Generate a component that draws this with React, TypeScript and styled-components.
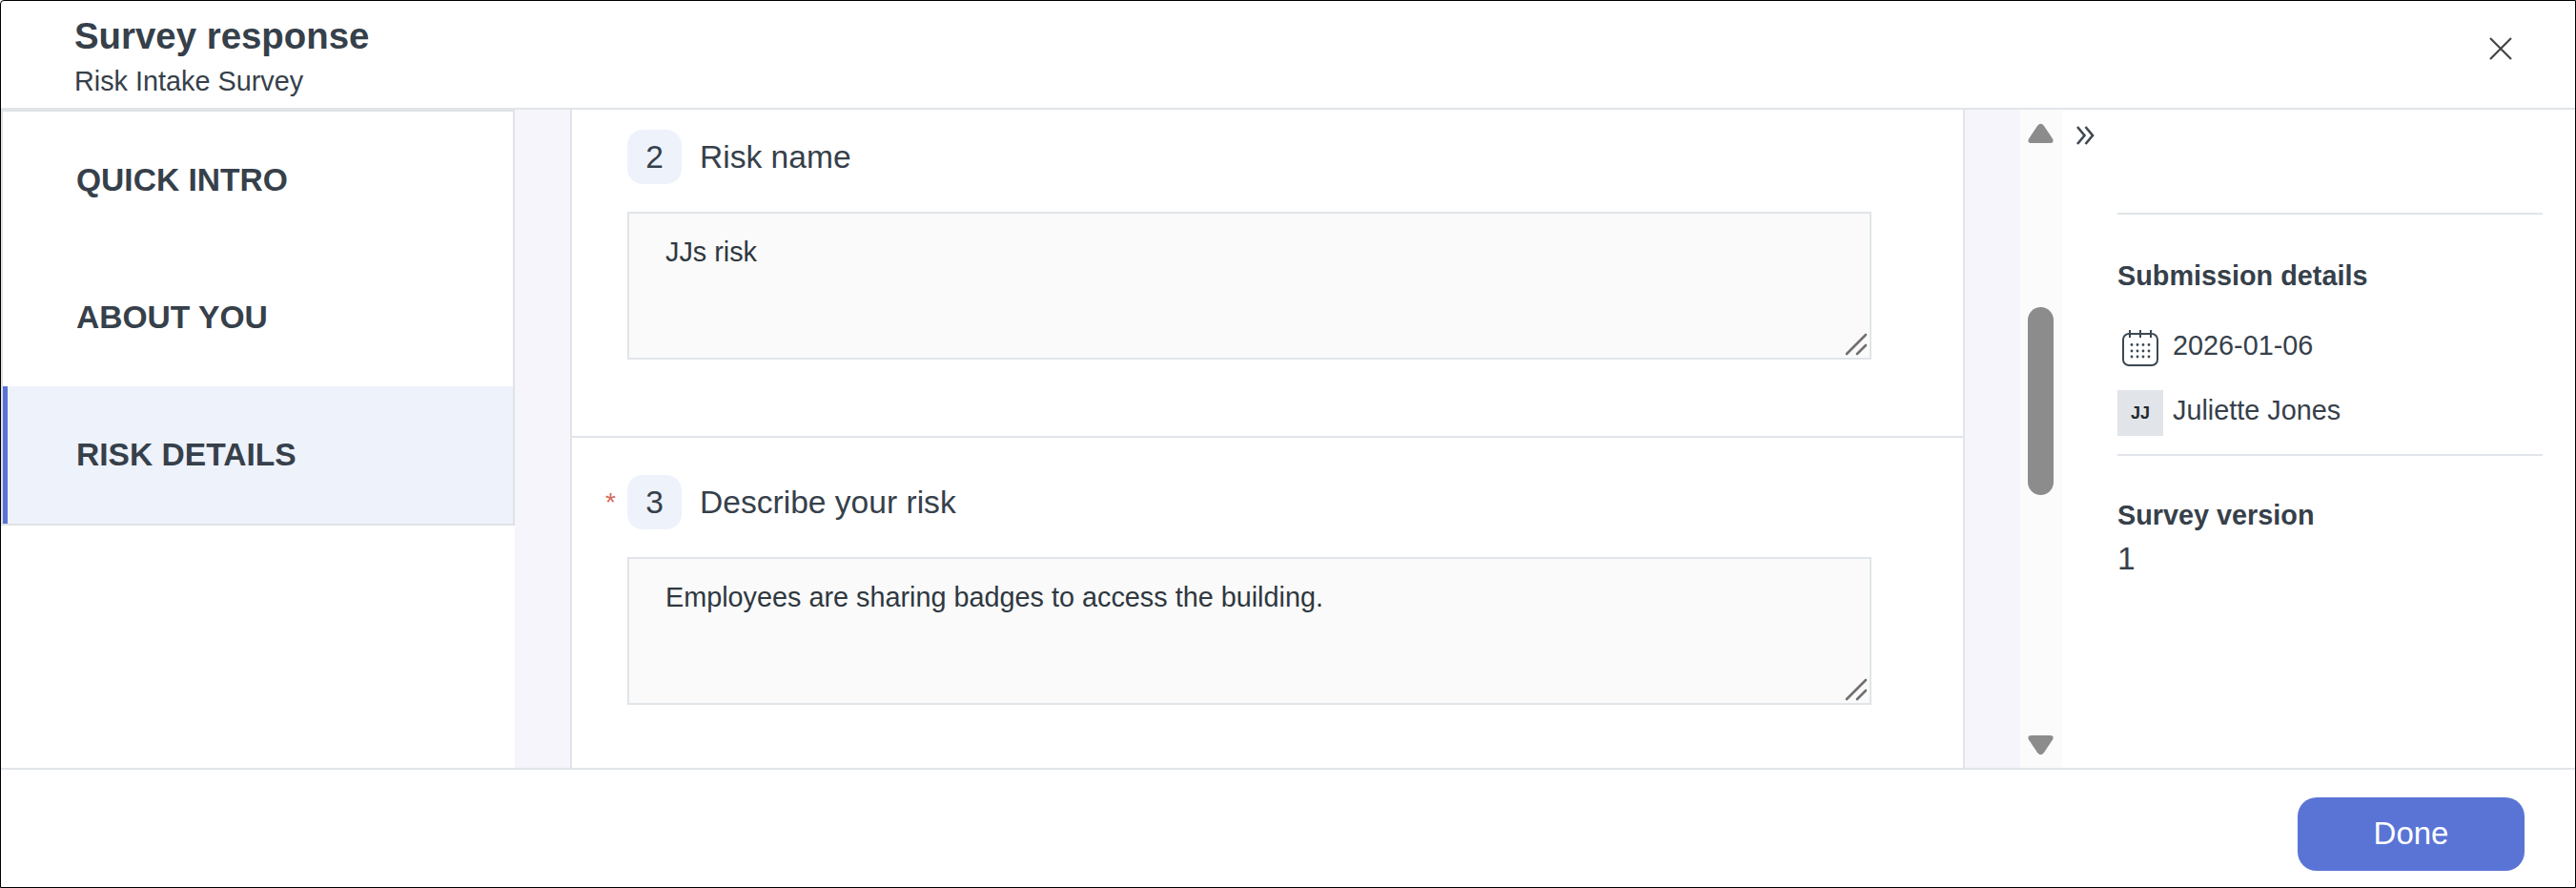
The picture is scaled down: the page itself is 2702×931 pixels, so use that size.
import React from 'react';
import styled, { createGlobalStyle } from 'styled-components';

const GlobalStyle = createGlobalStyle`
  html, body {
    margin: 0;
    padding: 0;
    background: #fff;
  }
  * {
    box-sizing: border-box;
  }
`;

const Frame = styled.div`
  width: 2702px;
  height: 931px;
  display: flex;
  flex-direction: column;
  border: 1px solid #000;
  border-top-left-radius: 4px;
  background: #fff;
  color: #36404a;
  font-family: 'Liberation Sans', Arial, sans-serif;
  overflow: hidden;
`;

const Header = styled.header`
  height: 114px;
  flex: none;
  display: flex;
  align-items: flex-start;
  justify-content: space-between;
  padding: 14px 66px 0 77px;
  border-bottom: 2px solid #e1e5e9;
`;

const Title = styled.h1`
  margin: 0;
  font-size: 38.4px;
  line-height: 46px;
  font-weight: 700;
`;

const Subtitle = styled.div`
  margin-top: 7px;
  font-size: 28.8px;
  line-height: 34px;
`;

const CloseButton = styled.button`
  margin-top: 24px;
  padding: 0;
  border: 0;
  background: none;
  display: flex;
`;

const Body = styled.div`
  flex: 1;
  min-height: 0;
  display: flex;
  background: #f5f5fb;
`;

const LeftRail = styled.div`
  width: 539px;
  flex: none;
  background: #fff;
`;

const Nav = styled.nav`
  border: 2px solid #dfe3e7;
  display: flex;
  flex-direction: column;
`;

const NavItem = styled.div<{ $active?: boolean }>`
  height: 144px;
  display: flex;
  align-items: center;
  padding-left: 72px;
  font-size: 33.6px;
  font-weight: 700;
  background: ${(p) => (p.$active ? '#eef2fb' : '#fff')};
  border-left: 5px solid ${(p) => (p.$active ? '#5a74d6' : '#fff')};
`;

const Main = styled.main`
  width: 1463px;
  margin-left: 58px;
  flex: none;
  background: #fff;
  border-left: 2px solid #e1e5e9;
  border-right: 2px solid #e1e5e9;
  overflow: hidden;
`;

const Question = styled.section<{ $top: number; $divided?: boolean }>`
  display: grid;
  grid-template-columns: 58px 1305px;
  row-gap: 29px;
  padding-top: ${(p) => p.$top}px;
  padding-bottom: 80px;
  border-bottom: ${(p) => (p.$divided ? '2px solid #e1e5e9' : '0')};
`;

const Gutter = styled.div`
  padding-left: 35px;
  display: flex;
  align-items: center;
  color: #d9695f;
  font-size: 28px;
  line-height: 28px;
`;

const QuestionHead = styled.div`
  display: flex;
  align-items: center;
  gap: 19px;
`;

const NumberBadge = styled.div`
  width: 57px;
  height: 57px;
  border-radius: 16px;
  background: #eef2fb;
  display: flex;
  align-items: center;
  justify-content: center;
  font-size: 33.6px;
`;

const QuestionLabel = styled.div`
  font-size: 33.6px;
`;

const Answer = styled.div`
  grid-column: 2;
  position: relative;
  height: 155px;
  padding: 23px 38px;
  border: 2px solid #e1e5e9;
  background: #fafafa;
  font-size: 28.8px;
  line-height: 34px;
  color: #2f3840;
`;

const Grip = styled.svg`
  position: absolute;
  right: 2px;
  bottom: 2px;
`;

const GapColumn = styled.div`
  width: 58px;
  flex: none;
`;

const Track = styled.div`
  width: 44px;
  flex: none;
  display: flex;
  flex-direction: column;
  align-items: center;
  background: #fbfbfb;
  padding: 14px 1px 13px 0;
`;

const Thumb = styled.div`
  width: 27px;
  height: 197px;
  margin-top: 172px;
  margin-bottom: auto;
  border-radius: 14px;
  background: #8c8c8c;
`;

const Panel = styled.aside`
  flex: 1;
  min-width: 0;
  background: #fff;
`;

const CollapseRow = styled.div`
  height: 108px;
  padding: 17px 0 0 15px;
  display: flex;
  align-items: flex-start;
`;

const PanelSection = styled.div<{ $top?: number }>`
  margin: ${(p) => p.$top ?? 0}px 34px 0 58px;
  border-top: 2px solid #e1e5e9;
`;

const SectionTitle = styled.div<{ $top: number }>`
  margin-top: ${(p) => p.$top}px;
  font-size: 28.8px;
  line-height: 34px;
  font-weight: 700;
`;

const MetaRow = styled.div<{ $top: number }>`
  margin-top: ${(p) => p.$top}px;
  display: flex;
  align-items: center;
  font-size: 28.8px;
`;

const MetaText = styled.span`
  line-height: 32px;
  padding-bottom: 6px;
`;

const CalendarSlot = styled.div`
  width: 58px;
  padding-left: 5px;
  display: flex;
`;

const Avatar = styled.div`
  width: 48px;
  height: 48px;
  margin-right: 10px;
  display: flex;
  align-items: center;
  justify-content: center;
  background: #e1e4e8;
  color: #23292f;
  font-size: 18px;
  font-weight: 700;
`;

const VersionValue = styled.div`
  margin-top: 10px;
  font-size: 33.6px;
  line-height: 38px;
`;

const Footer = styled.footer`
  flex: none;
  height: 125px;
  display: flex;
  align-items: flex-start;
  justify-content: flex-end;
  padding: 29px 53px 0 0;
  border-top: 2px solid #e1e5e9;
`;

const DoneButton = styled.button`
  width: 238px;
  height: 77px;
  padding: 0 0 2px;
  border: 0;
  border-radius: 20px;
  background: #5a74d6;
  color: #fff;
  font-family: inherit;
  font-size: 33px;
`;

function CloseIcon() {
  return (
    <svg width="24" height="24" viewBox="0 0 24 24" fill="none" stroke="#444" strokeWidth="2.2">
      <path d="M1 1 23 23M23 1 1 23" />
    </svg>
  );
}

function ResizeGrip() {
  return (
    <Grip width="24" height="24" viewBox="0 0 24 24" fill="none" stroke="#707070" strokeWidth="2.6" strokeLinecap="round">
      <path d="M2 22 22 2M13 22 22 13" />
    </Grip>
  );
}

function Arrow({ down }: { down?: boolean }) {
  return (
    <svg width="27" height="21" viewBox="0 0 27 21" fill="#8c8c8c">
      <path
        d={
          down
            ? 'M4 0H23Q28 0 26 4.500L17 18Q13.500 22.500 10 18L1 4.500Q-1 0 4 0Z'
            : 'M4 21H23Q28 21 26 16.500L17 3Q13.500 -1.500 10 3L1 16.500Q-1 21 4 21Z'
        }
      />
    </svg>
  );
}

function ChevronsIcon() {
  return (
    <svg width="19" height="20" viewBox="0 0 19 20" fill="none" stroke="#3c4852" strokeWidth="2.6">
      <path d="M1 1 8.500 10 1 19M9.500 1 17 10 9.500 19" />
    </svg>
  );
}

function CalendarIcon() {
  const dotsX = [10, 16, 22, 28];
  const dotsY = [15.5, 22, 28];
  return (
    <svg width="38" height="38" viewBox="0 0 38 38" fill="none" stroke="#3c4852" strokeWidth="2">
      <rect x="1" y="4" width="36" height="33" rx="6" />
      <path d="M8 0V8M19 0V8M30 0V8" />
      {dotsY.map((y) =>
        dotsX.map((x) => <circle key={`${x}-${y}`} cx={x} cy={y} r="1.4" fill="#3c4852" stroke="none" />),
      )}
    </svg>
  );
}

export default function App() {
  return (
    <>
      <GlobalStyle />
      <Frame>
        <Header>
          <div>
            <Title>Survey response</Title>
            <Subtitle>Risk Intake Survey</Subtitle>
          </div>
          <CloseButton aria-label="Close">
            <CloseIcon />
          </CloseButton>
        </Header>
        <Body>
          <LeftRail>
            <Nav>
              <NavItem>QUICK INTRO</NavItem>
              <NavItem>ABOUT YOU</NavItem>
              <NavItem $active>RISK DETAILS</NavItem>
            </Nav>
          </LeftRail>
          <Main>
            <Question $top={21} $divided>
              <Gutter />
              <QuestionHead>
                <NumberBadge>2</NumberBadge>
                <QuestionLabel>Risk name</QuestionLabel>
              </QuestionHead>
              <Answer>
                JJs risk
                <ResizeGrip />
              </Answer>
            </Question>
            <Question $top={39}>
              <Gutter>*</Gutter>
              <QuestionHead>
                <NumberBadge>3</NumberBadge>
                <QuestionLabel>Describe your risk</QuestionLabel>
              </QuestionHead>
              <Answer>
                Employees are sharing badges to access the building.
                <ResizeGrip />
              </Answer>
            </Question>
          </Main>
          <GapColumn />
          <Track>
            <Arrow />
            <Thumb />
            <Arrow down />
          </Track>
          <Panel>
            <CollapseRow>
              <ChevronsIcon />
            </CollapseRow>
            <PanelSection>
              <SectionTitle $top={47}>Submission details</SectionTitle>
              <MetaRow $top={40}>
                <CalendarSlot>
                  <CalendarIcon />
                </CalendarSlot>
                <MetaText>2026-01-06</MetaText>
              </MetaRow>
              <MetaRow $top={25}>
                <Avatar>JJ</Avatar>
                <MetaText>Juliette Jones</MetaText>
              </MetaRow>
            </PanelSection>
            <PanelSection $top={19}>
              <SectionTitle $top={45}>Survey version</SectionTitle>
              <VersionValue>1</VersionValue>
            </PanelSection>
          </Panel>
        </Body>
        <Footer>
          <DoneButton>Done</DoneButton>
        </Footer>
      </Frame>
    </>
  );
}
